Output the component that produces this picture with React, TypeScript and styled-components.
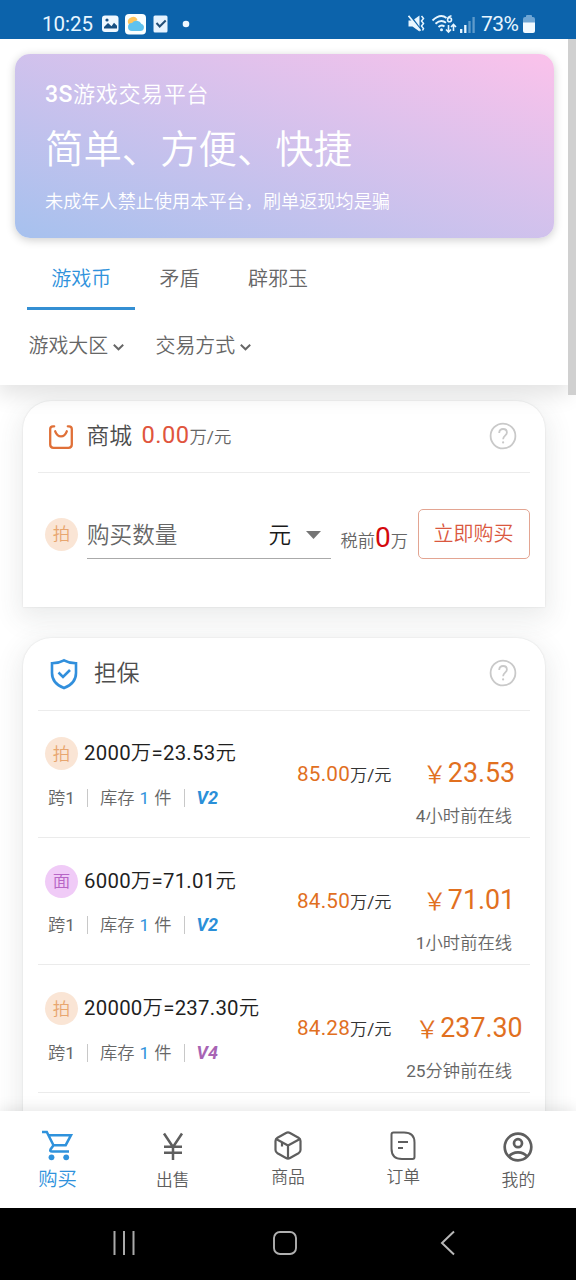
import React from "react";
import styled, { createGlobalStyle } from "styled-components";

const Global = createGlobalStyle`
  * { box-sizing: border-box; }
  body {
    margin: 0;
    background: #fff;
    font-family: Roboto, "Noto Sans CJK SC", sans-serif;
    color: #666;
  }
  svg { display: block; flex: none; }
`;

const Screen = styled.div`
  width: 576px;
  height: 1280px;
  display: flex;
  flex-direction: column;
  overflow: hidden;
  background: #fff;
`;

const Han = styled.span`
  font-weight: 350;
`;

/* Sets the Chinese runs of a mixed string in the lighter weight. */
const Mixed = ({ text }: { text: string }) => (
  <>
    {text.split(/([\u4e00-\u9fff]+)/).map((run, i) => (i % 2 ? <Han key={i}>{run}</Han> : run))}
  </>
);

/* ---------- system bars ---------- */

const StatusBar = styled.div`
  height: 39px;
  flex: none;
  display: flex;
  align-items: center;
  padding: 8px 41px 0 42px;
  background: #0c63ab;
  color: #e8f6ff;
  position: relative;
  z-index: 3;
`;

const Clock = styled.span`
  width: 60px;
  font-size: 20.5px;
  line-height: 30px;
`;

const StatusGroup = styled.div<{ $push?: boolean }>`
  display: flex;
  align-items: center;
  margin-left: ${(p) => (p.$push ? "auto" : "0")};
`;

const Battery = styled.span`
  width: 42px;
  margin-left: 3.5px;
  font-size: 21px;
  line-height: 30px;
  letter-spacing: -0.6px;
`;

const SystemNav = styled.div`
  height: 72px;
  flex: none;
  background: #000;
  display: flex;
  justify-content: space-between;
  align-items: center;
  padding: 0 118px 2px 112px;
`;

const HomeKey = styled.span`
  margin-right: 6px;
`;

/* ---------- header ---------- */

const Body = styled.div`
  flex: 1;
  min-height: 0;
  display: flex;
  flex-direction: column;
  overflow: hidden;
`;

const HeaderRow = styled.div`
  height: 356px;
  flex: none;
  display: flex;
  align-items: flex-start;
  position: relative;
  z-index: 1;
`;

const Header = styled.div`
  width: 568px;
  height: 346px;
  padding: 15px 14px 0 15px;
  background: #fff;
  box-shadow: 0 8px 20px 2px rgba(0, 0, 0, 0.11);
`;

const ScrollThumb = styled.div`
  width: 8px;
  height: 356px;
  background: #d0d0d0;
  position: relative;
`;

const Banner = styled.div`
  height: 184px;
  padding: 23px 30px 0;
  border-radius: 15px;
  background: linear-gradient(to top right, #a6c1ee, #fbc2eb);
  box-shadow: 0 2px 10px rgba(0, 0, 0, 0.2);
  color: #fff;
`;

const Brand = styled.div`
  font-size: 22.1px;
  line-height: 34px;
  letter-spacing: 0.55px;
  font-weight: 350;
  b { font-weight: 500; font-size: 23px; }
`;

const Slogan = styled.div`
  margin-top: 8px;
  font-size: 38.4px;
  line-height: 60px;
  font-weight: 350;
`;

const Notice = styled.div`
  margin-top: 7px;
  font-size: 18.16px;
  line-height: 30px;
  font-weight: 350;
`;

const Tabs = styled.div`
  display: flex;
  height: 72px;
  padding-left: 12px;
`;

const Tab = styled.div<{ $active?: boolean }>`
  height: 72px;
  padding: 25.5px 24.2px 0;
  font-size: 20px;
  line-height: 30px;
  font-weight: 350;
  color: ${(p) => (p.$active ? "#2f92dc" : "#666")};
  border-bottom: 3px solid ${(p) => (p.$active ? "#348fd3" : "transparent")};
`;

const Filters = styled.div`
  display: flex;
  gap: 32px;
  padding: 21.5px 0 0 13.5px;
`;

const Filter = styled.div`
  display: flex;
  align-items: center;
  gap: 4.5px;
  font-size: 19.9px;
  line-height: 30px;
  font-weight: 350;
`;

/* ---------- cards ---------- */

const Card = styled.section<{ $top: number; $height: number }>`
  width: 522px;
  height: ${(p) => p.$height}px;
  flex: none;
  margin: ${(p) => p.$top}px 0 0 23px;
  padding: 0 15px;
  border-radius: 28px 28px 0 0;
  background: #fff;
  box-shadow: 0 0 2px rgba(0, 0, 0, 0.12), 0 8px 26px 4px rgba(60, 64, 67, 0.1);
`;

const CardHead = styled.div<{ $height: number }>`
  height: ${(p) => p.$height}px;
  display: flex;
  align-items: center;
  padding: 0 13px 0 10.5px;
  border-bottom: 1.5px solid #ececec;
`;

const CardTitle = styled.span<{ $left: number }>`
  margin-left: ${(p) => p.$left}px;
  font-size: 22.8px;
  line-height: 34px;
  font-weight: 350;
  color: #4d4d4d;
`;

const Rate = styled.span`
  margin: -1px 0 0 9.5px;
  font-size: 17.4px;
  line-height: 34px;
  b { font-weight: 400; font-size: 23.7px; letter-spacing: 0.4px; color: #e0553d; }
`;

const HelpSlot = styled.div`
  margin: -1px 0 0 auto;
`;

const Badge = styled.span<{ $bg: string; $fg: string }>`
  width: 33px;
  height: 33px;
  flex: none;
  border-radius: 50%;
  display: flex;
  align-items: center;
  justify-content: center;
  font-size: 17.5px;
  line-height: 32px;
  font-weight: 350;
  background: ${(p) => p.$bg};
  color: ${(p) => p.$fg};
`;

const OrderLine = styled.div`
  display: flex;
  align-items: center;
  height: 50px;
  margin-top: 36px;
  padding-left: 7px;
`;

const AmountField = styled.div`
  width: 244px;
  height: 50px;
  margin-left: 9px;
  display: flex;
  align-items: center;
  padding: 0 10px 1px 0;
  border-bottom: 1.5px solid #aaa;
  font-size: 22.6px;
  font-weight: 350;
  color: #666;
`;

const Unit = styled.span`
  margin: 0 15px 0 auto;
  color: #1a1a1a;
`;

const Caret = styled.svg`
  margin-top: 3px;
`;

const PreTax = styled.div`
  width: 77px;
  margin: 10px 0 0 9.5px;
  font-size: 17.2px;
  line-height: 34px;
  white-space: nowrap;
  b { font-weight: 400; font-size: 28px; color: #d4090c; }
`;

const BuyButton = styled.button`
  width: 112px;
  height: 50px;
  flex: none;
  padding: 0;
  border: 1px solid #e3a592;
  border-radius: 5px;
  background: #fff;
  font: inherit;
  font-size: 20px;
  font-weight: 350;
  line-height: 48px;
  color: #da583f;
`;

const Offer = styled.div`
  height: 127.4px;
  display: grid;
  grid-template-columns: 252px 120px 104px;
  padding-left: 7px;
  border-bottom: 1.3px solid #ebebeb;
`;

const OfferTitle = styled.div`
  display: flex;
  align-items: center;
  gap: 6px;
  height: 34px;
  margin-top: 26.3px;
  font-size: 20.4px;
  letter-spacing: 0.25px;
  color: #1f1f1f;
  white-space: nowrap;
`;

const TitleText = styled.span`
  padding-bottom: 5px;
`;

const Meta = styled.div`
  display: flex;
  align-items: center;
  height: 30px;
  margin-top: 10.5px;
  padding-left: 3px;
  font-size: 17.3px;
  word-spacing: 0.7px;
  color: #666;
  white-space: pre;
  i { color: #2f92dc; font-style: normal; }
`;

const Bar = styled.span`
  width: 1px;
  height: 18px;
  margin: 3px 12px 0;
  background: #c8c8c8;
`;

const Level = styled.b<{ $color: string }>`
  margin-top: 2px;
  font-size: 18px;
  font-style: italic;
  color: ${(p) => p.$color};
`;

const UnitPrice = styled.div`
  margin-top: 46px;
  font-size: 17.2px;
  line-height: 34px;
  color: #333;
  white-space: nowrap;
  b { font-weight: 400; font-size: 20.7px; letter-spacing: 0.2px; color: #e1701f; }
`;

const PriceCell = styled.div`
  display: flex;
  flex-direction: column;
  align-items: center;
  white-space: nowrap;
`;

const Price = styled.div`
  display: flex;
  margin-top: 43.5px;
  font-size: 26.8px;
  line-height: 38px;
  color: #e1701f;
`;

const Yen = styled.span`
  width: 25px;
  font-family: "Noto Sans CJK SC", sans-serif;
  font-size: 24px;
  font-weight: 350;
  line-height: 37px;
`;

const Online = styled.div`
  align-self: flex-end;
  margin: 10px 9px 0 0;
  font-size: 17.3px;
  line-height: 28px;
`;

/* ---------- bottom navigation ---------- */

const TabBar = styled.nav`
  height: 97px;
  flex: none;
  display: grid;
  grid-template-columns: repeat(5, 1fr);
  background: #fff;
  box-shadow: 0 -2px 14px rgba(0, 0, 0, 0.1);
  position: relative;
  z-index: 2;
`;

const TabItem = styled.div<{ $active?: boolean; $top: number }>`
  display: flex;
  flex-direction: column;
  align-items: center;
  padding-top: ${(p) => p.$top}px;
  color: ${(p) => (p.$active ? "#2f92dc" : "#5e5e5e")};
  font-size: ${(p) => (p.$active ? 19.4 : 16.8)}px;
  font-weight: 350;
  line-height: 26px;
`;

const Chevron = () => (
  <svg width="11" height="10" viewBox="0 0 11 10" fill="none" stroke="#666" strokeWidth="1.9">
    <path d="M.8 2.700 5.500 7.300 10.200 2.700" />
  </svg>
);

const Help = () => (
  <svg width="28" height="28" viewBox="0 0 28 28" fill="none" stroke="#c9c9c9" strokeWidth="1.8">
    <circle cx="14" cy="14" r="12.4" />
    <path d="M10.2 10.900c0-2.500 1.600-3.900 3.900-3.900 2.200 0 3.800 1.400 3.800 3.500 0 3.200-3.800 3.200-3.800 6.800" />
    <circle cx="14.1" cy="20.400" r="1.1" fill="#c9c9c9" stroke="none" />
  </svg>
);

const offers = [
  { kind: "拍", title: "2000万=23.53元", rate: "85.00", price: "23.53", online: "4小时前在线", level: "V2", color: "#2a8fd8" },
  { kind: "面", title: "6000万=71.01元", rate: "84.50", price: "71.01", online: "1小时前在线", level: "V2", color: "#2a8fd8" },
  { kind: "拍", title: "20000万=237.30元", rate: "84.28", price: "237.30", online: "25分钟前在线", level: "V4", color: "#a864b4" },
];

const KindBadge = ({ kind }: { kind: string }) =>
  kind === "面" ? (
    <Badge $bg="#f0cbf7" $fg="#b765c6">{kind}</Badge>
  ) : (
    <Badge $bg="#fae5d5" $fg="#e8a66f">{kind}</Badge>
  );

export default function App() {
  return (
    <Screen>
      <Global />
      <StatusBar>
        <Clock>10:25</Clock>
        <StatusGroup>
          <svg width="90" height="22" viewBox="0 0 90 22">
            <rect x="0" y="2.500" width="16.500" height="16.500" rx="3" fill="#f0f8ff" />
            <path d="M2 15.500V14l4-4 3.500 3.200L12 9.800l3 3v2.700z" fill="#174f82" />
            <circle cx="5" cy="7" r="1.600" fill="#174f82" />
            <rect x="23" y="1" width="21" height="20.500" rx="4" fill="#fbffff" />
            <path d="M26 10a5 5 0 0 1 9.500-3l-8 5z" fill="#ffc55c" />
            <path d="M30 18a4 4 0 0 1 0-8 5.500 5.500 0 0 1 9.500 1A3.600 3.600 0 0 1 38.500 18z" fill="#5fc2ee" />
            <rect x="51.500" y="2.500" width="14" height="17" rx="1.500" fill="#e6f3ff" />
            <path d="m54.500 10 3.200 3.500 6-6" fill="none" stroke="#234e77" strokeWidth="2" />
            <circle cx="84" cy="11" r="3.300" fill="#f0f8ff" />
          </svg>
        </StatusGroup>
        <StatusGroup $push>
          <svg width="70" height="22" viewBox="0 0 70 22" fill="none" stroke="#e8f6ff">
            <path d="M.5 7.500h4L11.500 2.500v16L4.500 13.500h-4z" fill="#e8f6ff" stroke="none" />
            <path d="M1 1 14 18.500" stroke="#0c63ab" strokeWidth="2" />
            <path d="m.5 2.800 12 15" strokeWidth="1.700" />
            <path d="m13.500 3 2 2.500-2 2.500 2 2.500-2 2.500 2 2.500-1 2" strokeWidth="1.500" />
            <path d="M24.500 7.500q8-7.500 14-2.500M27.500 10.800q5.500-5 10.500-1M30.500 14q3-2.800 6-.5" strokeWidth="1.900" />
            <circle cx="33.500" cy="16.800" r="1.500" fill="#e8f6ff" stroke="none" />
            <path d="M43.500 2.700q-4 1-4 4a2 2 0 1 0 2-2q-1.500 0-2 2" strokeWidth="1.600" />
            <path d="M40.500 12v7m-2.500-2.500 2.500 2.500 2.500-2.500M45.500 18v-6.500m-2.500 2.500 2.500-2.500 2.500 2.500" strokeWidth="1.600" />
            <path d="M53.200 20v-4M57.300 20v-8" strokeWidth="2.300" />
            <path d="M61.500 20V8M65.600 20V4" strokeWidth="2.300" opacity=".38" />
          </svg>
          <Battery>73%</Battery>
          <svg width="12" height="18" viewBox="0 0 12 18">
            <path d="M3 2V1q0-1 1-1h4q1 0 1 1v1h1q2 0 2 2v4H0V4q0-2 2-2z" fill="#6ea5d4" />
            <path d="M0 7.500h12V16q0 2-2 2H2q-2 0-2-2z" fill="#f1f9ff" />
          </svg>
        </StatusGroup>
      </StatusBar>

      <Body>
        <HeaderRow>
          <Header>
            <Banner>
              <Brand><b>3S</b>游戏交易平台</Brand>
              <Slogan>简单、方便、快捷</Slogan>
              <Notice>未成年人禁止使用本平台，刷单返现均是骗</Notice>
            </Banner>
            <Tabs>
              <Tab $active>游戏币</Tab>
              <Tab>矛盾</Tab>
              <Tab>辟邪玉</Tab>
            </Tabs>
            <Filters>
              <Filter>游戏大区<Chevron /></Filter>
              <Filter>交易方式<Chevron /></Filter>
            </Filters>
          </Header>
          <ScrollThumb />
        </HeaderRow>

        <Card $top={6} $height={206}>
          <CardHead $height={72}>
            <svg width="24" height="24" viewBox="0 0 24 24" fill="none" stroke="#e07038" strokeWidth="2.300" strokeLinecap="round">
              <path d="M5.200 1.300H4Q1.200 1.300 1.200 4v15.500q0 3.300 3.300 3.300h15q3.300 0 3.300-3.300V4q0-2.700-2.800-2.700h-1.200" />
              <path d="M6.200 6.300q1.800 5 5.800 5t5.800-5" />
            </svg>
            <CardTitle $left={14}>商城</CardTitle>
            <Rate><b>0.00</b><Mixed text="万/元" /></Rate>
            <HelpSlot><Help /></HelpSlot>
          </CardHead>
          <OrderLine>
            <KindBadge kind="拍" />
            <AmountField>
              购买数量
              <Unit>元</Unit>
              <Caret width="15" height="8" viewBox="0 0 15 8"><path d="M0 0h15L7.500 8z" fill="#757575" /></Caret>
            </AmountField>
            <PreTax><Han>税前</Han><b>0</b><Han>万</Han></PreTax>
            <BuyButton>立即购买</BuyButton>
          </OrderLine>
        </Card>

        <Card $top={31} $height={600}>
          <CardHead $height={72.6}>
            <svg width="30" height="32" viewBox="0 0 30 32" fill="none" stroke="#318fdc" strokeWidth="2.600">
              <path d="M15 2.300q-5.500 3-12 3V15q0 10.500 12 15 12-4.500 12-15V5.300q-6.500 0-12-3z" />
              <path d="m9.500 14.500 4.500 4.500 7-7" />
            </svg>
            <CardTitle $left={15.5}>担保</CardTitle>
            <HelpSlot><Help /></HelpSlot>
          </CardHead>
          {offers.map((o) => (
            <Offer key={o.price}>
              <div>
                <OfferTitle><KindBadge kind={o.kind} /><TitleText><Mixed text={o.title} /></TitleText></OfferTitle>
                <Meta>
                  <span><Han>跨</Han>1</span><Bar /><span><Han>库存</Han> <i>1</i> <Han>件</Han></span><Bar />
                  <Level $color={o.color}>{o.level}</Level>
                </Meta>
              </div>
              <UnitPrice><b>{o.rate}</b><Mixed text="万/元" /></UnitPrice>
              <PriceCell>
                <Price><Yen>￥</Yen>{o.price}</Price>
                <Online><Mixed text={o.online} /></Online>
              </PriceCell>
            </Offer>
          ))}
        </Card>
      </Body>

      <TabBar>
        <TabItem $active $top={19}>
          <svg width="32" height="37" viewBox="0 0 32 37" fill="none" stroke="currentColor" strokeWidth="2.500">
            <path d="M0 2h4.800l6.700 13.200h12.200L29 5.200H6.500M11.500 15.200 8.500 19.500q-1 2 1.500 2h17" />
            <circle cx="9.500" cy="27.300" r="2.900" fill="currentColor" stroke="none" />
            <circle cx="24.200" cy="27.300" r="2.900" fill="currentColor" stroke="none" />
          </svg>
          购买
        </TabItem>
        <TabItem $top={21}>
          <svg width="22" height="35" viewBox="0 0 22 35" fill="none" stroke="currentColor" strokeWidth="2.500">
            <path d="M2 1.500 11 15 20 1.500M11 15v13M2 14.800h18M2 20.800h18" />
          </svg>
          出售
        </TabItem>
        <TabItem $top={20}>
          <svg width="30" height="33" viewBox="0 0 30 33" fill="none" stroke="currentColor" strokeWidth="2.200" strokeLinejoin="round">
            <path d="M13 2Q15 .9 17 2l8.500 4.800Q27.500 8 27.500 10v9q0 2-2 3.200L17 27q-2 1.100-4 0l-8.500-4.800q-2-1.200-2-3.200v-9q0-2 2-3.200z" />
            <path d="M3.500 8.300 15 14.500l11.500-6.200M15 14.500V27M9 11.500v4" />
          </svg>
          商品
        </TabItem>
        <TabItem $top={20}>
          <svg width="26" height="33" viewBox="0 0 26 33" fill="none" stroke="currentColor" strokeWidth="2">
            <path d="M3.500 1.500H14q10.500 0 10.500 10v14.500q0 2-2 2H12Q1.500 28 1.500 17.500V3.500q0-2 2-2z" />
            <path d="M8 11h10M8 17h5" />
          </svg>
          订单
        </TabItem>
        <TabItem $top={21}>
          <svg width="30" height="35" viewBox="0 0 30 35" fill="none" stroke="currentColor" strokeWidth="2.700">
            <circle cx="15" cy="15" r="13.300" />
            <circle cx="15" cy="11.200" r="4" />
            <path d="M6 24.500q3-4.200 9-4.200t9 4.200" />
          </svg>
          我的
        </TabItem>
      </TabBar>

      <SystemNav>
        <svg width="24" height="24" viewBox="0 0 24 24" stroke="#aaa" strokeWidth="2">
          <path d="M2.500 0v24M12 0v24M21.500 0v24" />
        </svg>
        <HomeKey>
          <svg width="24" height="24" viewBox="0 0 24 24" fill="none" stroke="#b0b0b0" strokeWidth="1.900">
            <rect x="1" y="1" width="22" height="22" rx="6" />
          </svg>
        </HomeKey>
        <svg width="18" height="26" viewBox="0 0 18 26" fill="none" stroke="#b8b8b8" strokeWidth="2">
          <path d="M14 1.500 2 13l12 11.500" />
        </svg>
      </SystemNav>
    </Screen>
  );
}
